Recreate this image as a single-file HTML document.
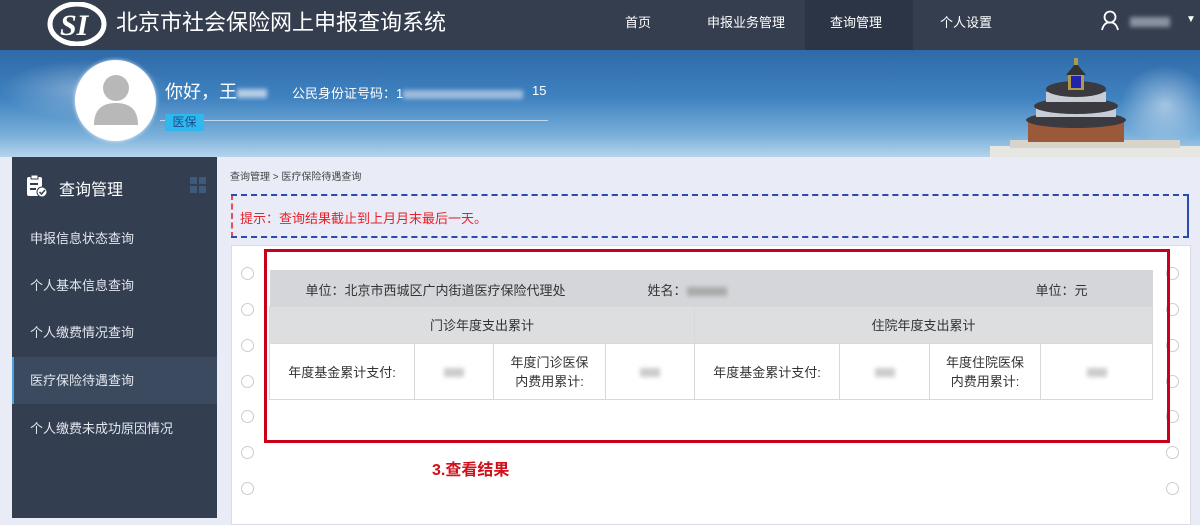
<!DOCTYPE html>
<html><head><meta charset="utf-8"><style>
*{margin:0;padding:0;box-sizing:border-box}
body{width:1200px;height:518px;overflow:hidden;position:relative;background:#e9ecf6;font-family:"Liberation Sans","Noto Sans CJK SC",sans-serif;font-size:13px;color:#333}
.abs{position:absolute}
.hdr{left:0;top:0;width:1200px;height:50px;background:#343e4f}
.nav{top:0;height:50px;line-height:46px;color:#fff;font-size:13px}
.ban{left:0;top:50px;width:1200px;height:107px;background:linear-gradient(180deg,#2f6aa8 0%,#3f82c0 45%,#7ab0da 80%,#b6d4ec 100%)}
.side{left:12px;top:157px;width:205px;height:361px;background:#333e50}
.si{left:12px;width:205px;height:47px;line-height:47px;padding-left:18px;color:#e3e7ee;font-size:13px}
.circ{width:13px;height:13px;border:1px solid #ccc;border-radius:50%;background:#fff}
table{border-collapse:collapse;font-size:13px;color:#333}
td{border:1px solid #d8d8d8;text-align:center}
.blur{display:inline-block;background:#ccc;filter:blur(2px);height:9px;vertical-align:middle}
</style></head><body>
<div class="abs hdr"></div>
<svg class="abs" style="left:47px;top:2px" width="60" height="44" viewBox="0 0 60 44">
<ellipse cx="30" cy="22" rx="27" ry="20" fill="none" stroke="#fff" stroke-width="5"/>
<text x="13" y="33" font-family="Liberation Serif" font-style="italic" font-weight="bold" font-size="30" fill="#fff">SI</text>
</svg>
<div class="abs" style="left:116px;top:9px;color:#fff;font-size:22px;line-height:28px">北京市社会保险网上申报查询系统</div>
<div class="abs" style="left:805px;top:0;width:108px;height:50px;background:#2c3545"></div>
<div class="abs nav" style="left:625px">首页</div>
<div class="abs nav" style="left:707px">申报业务管理</div>
<div class="abs nav" style="left:830px">查询管理</div>
<div class="abs nav" style="left:940px">个人设置</div>
<svg class="abs" style="left:1100px;top:10px" width="20" height="22" viewBox="0 0 20 22"><circle cx="10" cy="7" r="5.5" fill="none" stroke="#fff" stroke-width="1.8"/><path d="M2 20 Q4 12 10 12.5 Q16 12 18 20" fill="none" stroke="#fff" stroke-width="1.8"/></svg>
<div class="abs" style="left:1130px;top:17px;width:40px;height:10px;background:#8a93a0;filter:blur(2px)"></div>
<div class="abs" style="left:1186px;top:14px;color:#fff;font-size:10px">▼</div>

<div class="abs ban"></div>
<div class="abs" style="left:0;top:60px;width:170px;height:60px;background:radial-gradient(ellipse,rgba(255,255,255,.35),rgba(255,255,255,0) 70%)"></div>
<div class="abs" style="left:1120px;top:65px;width:90px;height:80px;background:radial-gradient(ellipse,rgba(255,255,255,.5),rgba(255,255,255,0) 70%)"></div>
<svg class="abs" style="left:990px;top:58px" width="210" height="99" viewBox="0 0 210 99">
<rect x="0" y="88" width="210" height="11" fill="#e6e6e2"/>
<rect x="20" y="82" width="170" height="8" fill="#d8d4cc"/>
<rect x="38" y="62" width="96" height="22" fill="#9a5a3a"/>
<ellipse cx="86" cy="62" rx="50" ry="8" fill="#3a3a40"/>
<rect x="46" y="50" width="80" height="9" fill="#c8ccd4"/>
<ellipse cx="86" cy="48" rx="42" ry="8" fill="#3a3a40"/>
<rect x="56" y="34" width="60" height="10" fill="#c8ccd4"/>
<ellipse cx="86" cy="31" rx="30" ry="8" fill="#3a3a40"/>
<rect x="78" y="16" width="16" height="16" fill="#b09a4a"/><rect x="81" y="18" width="10" height="12" fill="#2222aa"/>
<path d="M76 17 L86 5 L96 17Z" fill="#333"/><rect x="84" y="0" width="4" height="7" fill="#b09a4a"/>
</svg>
<div class="abs" style="left:75px;top:60px;width:81px;height:81px;border-radius:50%;background:#fff;box-shadow:0 0 4px rgba(255,255,255,.8)"></div>
<svg class="abs" style="left:90px;top:73px" width="52" height="56" viewBox="0 0 52 56"><circle cx="26" cy="15" r="13" fill="#b8b8b8"/><path d="M4 52 Q4 30 26 30 Q48 30 48 52Z" fill="#b8b8b8"/></svg>
<div class="abs" style="left:165px;top:78px;color:#fff;font-size:18px">你好，王<span class="blur" style="width:30px;background:#b7cde6"></span></div>
<div class="abs" style="left:292px;top:83px;color:#fff;font-size:13px">公民身份证号码：1<span class="blur" style="width:120px;background:#9dbbdc"></span></div>
<div class="abs" style="left:532px;top:83px;color:#fff;font-size:13px">15</div>
<div class="abs" style="left:160px;top:120px;width:388px;height:1px;background:rgba(255,255,255,.6)"></div>
<div class="abs" style="left:165px;top:114px;width:39px;height:17px;background:#2fb8ee;color:#1a4c8a;font-size:12px;text-align:center;line-height:17px">医保</div>

<div class="abs side"></div>
<svg class="abs" style="left:26px;top:174px" width="22" height="24" viewBox="0 0 22 24"><rect x="1" y="3" width="15" height="19" rx="2" fill="#fff"/><rect x="5" y="1" width="7" height="4" fill="#fff" stroke="#333e50"/><rect x="4" y="9" width="8" height="2" fill="#333e50"/><rect x="4" y="14" width="6" height="2" fill="#333e50"/><circle cx="16" cy="18" r="5" fill="#fff" stroke="#333e50"/><path d="M13.5 18 L15.5 20 L19 16" stroke="#333e50" stroke-width="1.5" fill="none"/></svg>
<div class="abs" style="left:59px;top:176px;color:#fff;font-size:16px">查询管理</div>
<div class="abs" style="left:190px;top:177px;width:7px;height:7px;background:#3e5b7c"></div>
<div class="abs" style="left:199px;top:177px;width:7px;height:7px;background:#3e5b7c"></div>
<div class="abs" style="left:190px;top:186px;width:7px;height:7px;background:#3e5b7c"></div>
<div class="abs" style="left:199px;top:186px;width:7px;height:7px;background:#3e5b7c"></div>
<div class="abs si" style="top:215px">申报信息状态查询</div>
<div class="abs si" style="top:262px">个人基本信息查询</div>
<div class="abs si" style="top:309px">个人缴费情况查询</div>
<div class="abs si" style="top:357px;background:#3b4a5f;border-left:2px solid #4aa3df;padding-left:16px">医疗保险待遇查询</div>
<div class="abs si" style="top:405px">个人缴费未成功原因情况</div>

<div class="abs" style="left:230px;top:168px;font-size:10px;color:#444">查询管理 &gt; 医疗保险待遇查询</div>
<div class="abs" style="left:231px;top:194px;width:958px;height:44px;border:2px dashed #e0505a;background:#e9ecf6"></div>
<div class="abs" style="left:231px;top:194px;width:958px;height:44px;border:2px dashed #2a4bb0;border-left:none;border-right:none"></div>
<div class="abs" style="left:1187px;top:194px;width:2px;height:44px;background:#2a4bb0"></div>
<div class="abs" style="left:240px;top:208px;color:#e8202a;font-size:13px">提示：查询结果截止到上月月末最后一天。</div>

<div class="abs" style="left:231px;top:245px;width:960px;height:280px;background:#fff;border:1px solid #d8dce4"></div>
<div class="abs circ" style="left:241px;top:267px"></div><div class="abs circ" style="left:241px;top:303px"></div><div class="abs circ" style="left:241px;top:339px"></div><div class="abs circ" style="left:241px;top:375px"></div><div class="abs circ" style="left:241px;top:410px"></div><div class="abs circ" style="left:241px;top:446px"></div><div class="abs circ" style="left:241px;top:482px"></div>

<div class="abs" style="left:264px;top:249px;width:906px;height:194px;border:3px solid #c8001a;background:#fff"></div>
<div class="abs circ" style="left:1166px;top:267px"></div><div class="abs circ" style="left:1166px;top:303px"></div><div class="abs circ" style="left:1166px;top:339px"></div><div class="abs circ" style="left:1166px;top:375px"></div><div class="abs circ" style="left:1166px;top:410px"></div><div class="abs circ" style="left:1166px;top:446px"></div><div class="abs circ" style="left:1166px;top:482px"></div>
<div class="abs" style="left:1167px;top:249px;width:3px;height:194px;background:#c8001a"></div>
<table class="abs" style="left:269px;top:270px;width:884px">
<tr style="height:36px;background:#d4d6d9"><td colspan="8" style="border:none;text-align:left;position:relative"><span style="position:absolute;left:36px;top:10px">单位：北京市西城区广内街道医疗保险代理处</span><span style="position:absolute;left:378px;top:10px">姓名：<span class="blur" style="width:40px;background:#aaa"></span></span><span style="position:absolute;left:766px;top:10px">单位：元</span></td></tr>
<tr style="height:37px;background:#dcdee0"><td colspan="4">门诊年度支出累计</td><td colspan="4">住院年度支出累计</td></tr>
<tr style="height:56px;background:#fff">
<td style="width:145px">年度基金累计支付:</td><td style="width:79px"><span class="blur" style="width:20px"></span></td><td style="width:112px">年度门诊医保<br>内费用累计:</td><td style="width:89px"><span class="blur" style="width:20px"></span></td>
<td style="width:145px">年度基金累计支付:</td><td style="width:90px"><span class="blur" style="width:20px"></span></td><td style="width:111px">年度住院医保<br>内费用累计:</td><td><span class="blur" style="width:20px"></span></td></tr>
</table>
<div class="abs" style="left:432px;top:456px;color:#d0101a;font-size:16px;font-weight:bold">3.查看结果</div>
</body></html>
